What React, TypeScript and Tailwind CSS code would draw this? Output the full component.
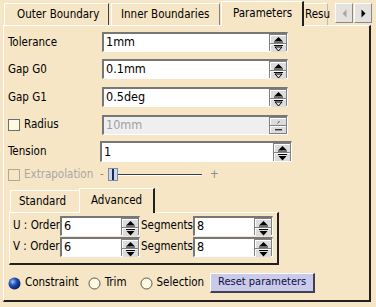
import React from "react";

function UpIcon() {
  return (
    <svg width="9" height="7" viewBox="0 0 9 7">
      <polygon points="0.5,5 4.5,1 8.5,5" fill="#000" />
      <rect x="0" y="5.5" width="9" height="1" fill="#000" />
    </svg>
  );
}

function DownIcon({ hollow }: { hollow?: boolean }) {
  return (
    <svg width="9" height="7" viewBox="0 0 9 7">
      <rect x="0" y="0" width="9" height="1" fill="#000" />
      {hollow ? (
        <polygon points="1,2 8,2 4.5,6" fill="none" stroke="#000" strokeWidth="1" />
      ) : (
        <polygon points="0.5,2 8.5,2 4.5,6.5" fill="#000" />
      )}
    </svg>
  );
}

function SpinButtons({ hollow, disabled }: { hollow?: boolean; disabled?: boolean }) {
  const half =
    "flex-1 flex items-center justify-center bg-[#dcdcdc] border-t border-l border-t-white border-l-white";
  return (
    <div className="w-[18px] flex flex-col bg-[#808080] p-px gap-px">
      <div className={half}>
        {disabled ? (
          <svg width="9" height="6" viewBox="0 0 9 6">
            <line x1="3.5" y1="4.5" x2="5.5" y2="2" stroke="#555" strokeWidth="1" />
          </svg>
        ) : (
          <UpIcon />
        )}
      </div>
      <div className={half}>
        {disabled ? (
          <svg width="9" height="6" viewBox="0 0 9 6">
            <rect x="1" y="2" width="7" height="1.4" fill="#333" />
          </svg>
        ) : (
          <DownIcon hollow={hollow} />
        )}
      </div>
    </div>
  );
}

function SpinField({
  value,
  width,
  height,
  hollow,
  disabled,
}: {
  value: string;
  width: string;
  height: string;
  hollow?: boolean;
  disabled?: boolean;
}) {
  return (
    <div
      className={`${width} ${height} flex border-t-2 border-l-2 border-t-[#777] border-l-[#777] border-b border-r border-b-white border-r-white`}
    >
      <div
        className={`flex-1 flex items-center pl-[2px] text-[12.5px] ${
          disabled ? "bg-[#efefef] text-[#a0a0a0]" : "bg-white text-black"
        }`}
      >
        {value}
      </div>
      <SpinButtons hollow={hollow} disabled={disabled} />
    </div>
  );
}

function CheckBox({ disabled }: { disabled?: boolean }) {
  return (
    <div
      className={`w-[12px] h-[12px] border ${
        disabled ? "border-[#b0a898] bg-[#f6e6c6]" : "border-[#6e6e6e] bg-[#fffbe2]"
      }`}
    />
  );
}

function Radio({ checked }: { checked?: boolean }) {
  if (checked) {
    return (
      <svg width="13" height="13" viewBox="0 0 13 13">
        <defs>
          <radialGradient id="rb" cx="0.35" cy="0.35" r="0.7">
            <stop offset="0" stopColor="#9fc2ff" />
            <stop offset="0.45" stopColor="#1f4fb5" />
            <stop offset="1" stopColor="#0b1d55" />
          </radialGradient>
        </defs>
        <circle cx="6.5" cy="6.5" r="6" fill="url(#rb)" />
      </svg>
    );
  }
  return (
    <svg width="13" height="13" viewBox="0 0 13 13">
      <circle cx="6.5" cy="6.5" r="5.5" fill="#fffbe2" stroke="#555" strokeWidth="1" />
    </svg>
  );
}

export default function App() {
  return (
    <div className="w-[376px] h-[307px] bg-[#f6e6c6] overflow-hidden font-['DejaVu_Sans_Condensed','DejaVu_Sans',sans-serif] text-[11.5px] text-black">
      {/* Tab strip */}
      <div className="h-[25px] flex items-end pl-[4px]">
        <div className="w-[105px] h-[22px] flex items-center pl-[12px] border-t border-l border-white border-r border-r-[#404040] rounded-tl-[2px]">
          Outer Boundary
        </div>
        <div className="ml-[2px] w-[109px] h-[22px] flex items-center pl-[9px] border-t border-l border-white border-r border-r-[#808080]">
          Inner Boundaries
        </div>
        <div className="relative z-10 -mb-px ml-px w-[83px] h-[25px] flex items-center pl-[11px] bg-[#f6e6c6] border-t border-l border-white border-r-2 border-r-[#202020]">
          Parameters
        </div>
        <div className="w-[24px] h-[22px] flex items-center pl-px whitespace-nowrap border-t border-white border-r border-r-dashed border-r-[#bbb]">
          Resu
        </div>
        <div className="self-start mt-[3px] ml-[7px] flex gap-px">
          <div className="w-[18px] h-[20px] flex items-center justify-center bg-[#e4e2de] border border-t-white border-l-white border-b-[#888] border-r-[#888]">
            <svg width="5" height="9" viewBox="0 0 5 9">
              <polygon points="4.5,0.5 4.5,8.5 0.5,4.5" fill="#a6a6a6" />
            </svg>
          </div>
          <div className="w-[18px] h-[20px] flex items-center justify-center bg-[#e4e2de] border border-t-white border-l-white border-b-[#888] border-r-[#888]">
            <svg width="5" height="9" viewBox="0 0 5 9">
              <polygon points="0.5,0.5 0.5,8.5 4.5,4.5" fill="#000" />
            </svg>
          </div>
        </div>
      </div>

      {/* Panel */}
      <div className="ml-[3px] w-[368px] h-[277px] border-t border-l border-white border-r-2 border-b-2 border-r-[#202020] border-b-[#202020] pl-[4px] pt-[6px] flex flex-col">
        <div className="h-[20px] flex items-center">
          <div className="w-[94px] pt-px">Tolerance</div>
          <SpinField value="1mm" width="w-[186px]" height="h-[20px]" hollow />
        </div>
        <div className="mt-[7px] h-[20px] flex items-center">
          <div className="w-[94px] pt-px">Gap G0</div>
          <SpinField value="0.1mm" width="w-[186px]" height="h-[20px]" hollow />
        </div>
        <div className="mt-[8px] h-[20px] flex items-center">
          <div className="w-[94px] pt-px">Gap G1</div>
          <SpinField value="0.5deg" width="w-[186px]" height="h-[20px]" hollow />
        </div>
        <div className="mt-[8px] h-[20px] flex items-center">
          <div className="w-[94px] flex items-center gap-[4px]">
            <CheckBox />
            <span>Radius</span>
          </div>
          <SpinField value="10mm" width="w-[186px]" height="h-[20px]" disabled />
        </div>
        <div className="mt-[6px] h-[21px] flex items-center">
          <div className="w-[92px] pt-px">Tension</div>
          <SpinField value="1" width="w-[192px]" height="h-[21px]" />
        </div>
        <div className="mt-[6px] h-[13px] flex items-center">
          <div className="w-[92px] flex items-center gap-[4px] text-[#a8a8a8]">
            <CheckBox disabled />
            <span>Extrapolation</span>
          </div>
          <span className="text-[#8a8a8a] w-[8px]">-</span>
          <div className="w-[10px] h-[13px] bg-[#cfd8e8] border border-[#7a8aa8] flex justify-center">
            <div className="w-[2px] h-full bg-[#1a2a55]" />
          </div>
          <div className="w-[84px] flex flex-col">
            <div className="h-px bg-[#404040]" />
            <div className="h-px bg-white" />
          </div>
          <span className="ml-[8px] text-[#8a8a8a]">+</span>
        </div>

        {/* Sub tabs */}
        <div className="mt-[7px] ml-px flex flex-col">
          <div className="h-[24px] flex items-end pl-px">
            <div className="w-[69px] h-[22px] flex items-center pl-[8px] border-t border-l border-white">
              Standard
            </div>
            <div className="relative z-10 -mb-px w-[76px] h-[25px] flex items-center pl-[11px] bg-[#f6e6c6] border-t border-l border-white border-r-2 border-r-[#202020]">
              Advanced
            </div>
          </div>
          <div className="w-[270px] h-[53px] border-t border-l border-white border-r-2 border-b-2 border-r-[#202020] border-b-[#202020] pt-[3px] pl-[3px] flex flex-col gap-px">
            <div className="h-[20px] flex items-center">
              <div className="w-[47px] whitespace-nowrap">U : Order</div>
              <SpinField value="6" width="w-[80px]" height="h-[20px]" />
              <div className="w-[53px] whitespace-nowrap pl-px">Segments</div>
              <SpinField value="8" width="w-[80px]" height="h-[20px]" />
            </div>
            <div className="h-[20px] flex items-center">
              <div className="w-[47px] whitespace-nowrap">V : Order</div>
              <SpinField value="6" width="w-[80px]" height="h-[20px]" />
              <div className="w-[53px] whitespace-nowrap pl-px">Segments</div>
              <SpinField value="8" width="w-[80px]" height="h-[20px]" />
            </div>
          </div>
        </div>

        {/* Radio row */}
        <div className="mt-[8px] h-[20px] flex items-center">
          <Radio checked />
          <span className="ml-[4px]">Constraint</span>
          <span className="ml-[9px]">
            <Radio />
          </span>
          <span className="ml-[4px]">Trim</span>
          <span className="ml-[14px]">
            <Radio />
          </span>
          <span className="ml-[3px]">Selection</span>
          <button className="ml-[6px] w-[105px] h-[20px] bg-[#cacaea] text-[11px] text-[#10103a] border-t border-l border-white border-r-2 border-b-2 border-r-[#404050] border-b-[#404050]">
            Reset parameters
          </button>
        </div>
      </div>
    </div>
  );
}
